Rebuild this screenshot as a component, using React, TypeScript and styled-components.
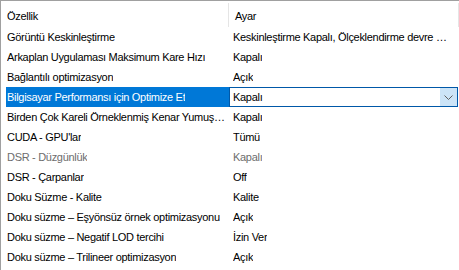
import React from 'react'
import styled, { createGlobalStyle } from 'styled-components'

const GlobalStyle = createGlobalStyle`
  html, body {
    margin: 0;
    padding: 0;
    background: #ffffff;
  }
  body {
    font-family: 'Liberation Sans', Arial, sans-serif;
    font-size: 11px;
    letter-spacing: -0.3px;
    color: #000000;
  }
`

const GridUI = styled.div`
  width: 459px;
  height: 270px;
  box-sizing: border-box;
  border-top: 1px solid #a0a0a0;
  border-left: 1px solid #a0a0a0;
  overflow: hidden;
  display: grid;
  grid-template-columns: 228px 230px;
  grid-auto-rows: 20px;
  grid-template-rows: 26px;
`
const HeaderCellUI = styled.div`
  display: flex;
  align-items: center;
  padding: 2px 0 0 6px;
  border-right: 1px solid #e5e5e5;
  margin: 2px 0 0 0;
  white-space: nowrap;
`
const CellUI = styled.div<{ $value?: boolean; $disabled?: boolean; $selected?: boolean }>`
  display: flex;
  align-items: center;
  padding: 0 ${(p) => (p.$value ? '10px' : '1px')} 0 ${(p) => (p.$value ? '4px' : p.$selected ? '1px' : '6px')};
  margin-left: ${(p) => (p.$selected ? '5px' : '0')};
  min-width: 0;
  color: ${(p) => (p.$disabled ? '#6d6d6d' : p.$selected ? '#ffffff' : '#000000')};
  background: ${(p) => (p.$selected ? '#0078d7' : 'transparent')};
  span {
    overflow: hidden;
    text-overflow: ellipsis;
    white-space: nowrap;
  }
`
const ComboUI = styled.div`
  display: flex;
  align-items: stretch;
  margin-right: 1px;
  border: 1px solid #0058a8;
  background: #ffffff;
`
const ComboTextUI = styled.div`
  flex: 1;
  display: flex;
  align-items: center;
  padding-left: 3px;
`
const ComboButtonUI = styled.div`
  width: 17px;
  background: #cce4f7;
  display: flex;
  align-items: center;
  justify-content: center;
`

type Row = { name: string; value: string; disabled?: boolean; selected?: boolean }

const rows: Row[] = [
  { name: 'Görüntü Keskinleştirme', value: 'Keskinleştirme Kapalı, Ölçeklendirme devre dışı' },
  { name: 'Arkaplan Uygulaması Maksimum Kare Hızı', value: 'Kapalı' },
  { name: 'Bağlantılı optimizasyon', value: 'Açık' },
  { name: 'Bilgisayar Performansı için Optimize Et', value: 'Kapalı', selected: true },
  { name: 'Birden Çok Kareli Örneklenmiş Kenar Yumuşatma (MFAA)', value: 'Kapalı' },
  { name: "CUDA - GPU'lar", value: 'Tümü' },
  { name: 'DSR - Düzgünlük', value: 'Kapalı', disabled: true },
  { name: 'DSR - Çarpanlar', value: 'Off' },
  { name: 'Doku Süzme - Kalite', value: 'Kalite' },
  { name: 'Doku süzme – Eşyönsüz örnek optimizasyonu', value: 'Açık' },
  { name: 'Doku süzme – Negatif LOD tercihi', value: 'İzin Ver' },
  { name: 'Doku süzme – Trilineer optimizasyon', value: 'Açık' },
]

const Chevron = () => (
  <svg width="9" height="5" viewBox="0 0 9 5">
    <path d="M0.5 0.5 L4.5 4.5 L8.5 0.5" fill="none" stroke="#606060" strokeWidth="1" />
  </svg>
)

export default function App() {
  return (
    <>
      <GlobalStyle />
      <GridUI>
        <HeaderCellUI>Özellik</HeaderCellUI>
        <HeaderCellUI>Ayar</HeaderCellUI>
        {rows.map((r) => (
          <React.Fragment key={r.name}>
            <CellUI $disabled={r.disabled} $selected={r.selected}>
              <span>{r.name}</span>
            </CellUI>
            {r.selected ? (
              <ComboUI>
                <ComboTextUI>{r.value}</ComboTextUI>
                <ComboButtonUI>
                  <Chevron />
                </ComboButtonUI>
              </ComboUI>
            ) : (
              <CellUI $value $disabled={r.disabled}>
                <span>{r.value}</span>
              </CellUI>
            )}
          </React.Fragment>
        ))}
      </GridUI>
    </>
  )
}
